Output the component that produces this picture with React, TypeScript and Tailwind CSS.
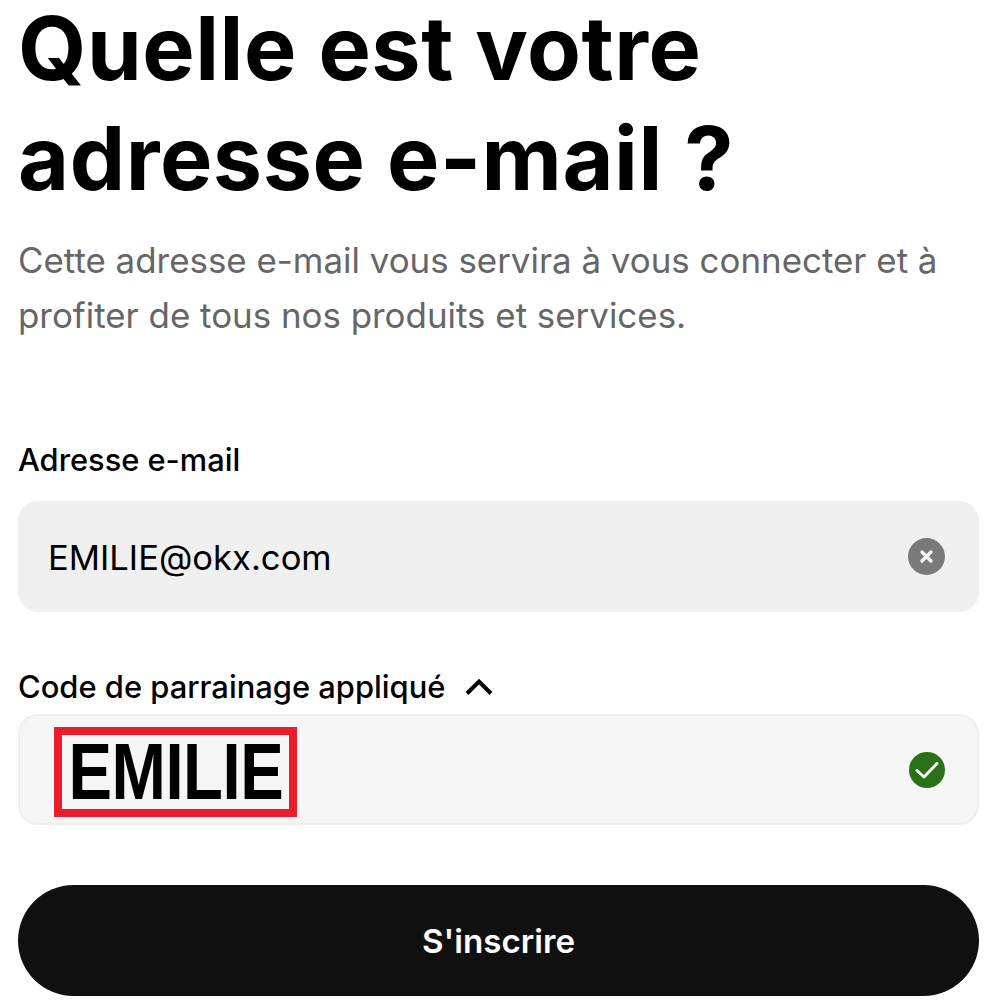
import React from "react";

const sans = "font-['Inter','Liberation_Sans',sans-serif]";

export default function App() {
  return (
    <div className={`w-[1000px] h-[1000px] overflow-hidden bg-white px-[18px] ${sans}`}>
      <div className="w-[961px]">
        <h1 className="text-[88px] font-bold text-black tracking-[0.55px]">
          <span className="block leading-[96px]">Quelle est votre</span>
          <span className="block mt-[7px] leading-[110px]">adresse e-mail ?</span>
        </h1>
        <p className="mt-[20px] text-[34.9px] leading-[55px] text-[#666666]">
          Cette adresse e-mail vous servira à vous connecter et à profiter de tous nos produits et services.
        </p>

        <label className="block mt-[97px] text-[30.8px] leading-[40px] font-medium text-black">Adresse e-mail</label>
        <div className="mt-[21px] h-[111px] rounded-[20px] bg-[#f0f0f0] pl-[30px] pr-[34px] flex items-center justify-between">
          <span className="pt-[3px] text-[34.6px] text-black">EMILIE@okx.com</span>
          <svg width="37" height="37" viewBox="0 0 37 37">
            <circle cx="18.5" cy="18.5" r="18.5" fill="#7a7a7a" />
            <path d="M14 14l9 9M23 14l-9 9" stroke="#f5f5f5" strokeWidth="3.4" strokeLinecap="round" />
          </svg>
        </div>

        <div className="mt-[55px] flex items-center gap-[20px] text-[30.9px] leading-[40px] font-medium text-black">
          <span>Code de parrainage appliqué</span>
          <svg width="28" height="18" viewBox="0 0 28 18" fill="none">
            <path d="M2 15.5L14 3.5l12 12" stroke="#000" strokeWidth="4" strokeLinejoin="miter" />
          </svg>
        </div>
        <div className="relative mt-[7px] h-[111px] rounded-[20px] bg-[#f6f6f6] border-2 border-[#efefef] pr-[32px] flex items-center justify-end">
          <div className="absolute left-[34px] top-[11px] w-[243px] h-[90px] border-[8px] border-[#ec1c2b] flex items-center justify-center overflow-hidden">
            <span className="font-['Liberation_Sans',sans-serif] font-bold text-[80px] leading-none text-black tracking-[-0.5px] inline-block scale-x-[0.815]">EMILIE</span>
          </div>
          <svg width="36" height="36" viewBox="0 0 36 36">
            <circle cx="18" cy="18" r="18" fill="#2b7119" />
            <path d="M8 18.5l7 6.5L28 11.5" stroke="#f5f5f5" strokeWidth="3" fill="none" strokeLinecap="round" strokeLinejoin="round" />
          </svg>
        </div>

        <button className="mt-[60px] pt-[2px] w-full h-[111px] rounded-full bg-[#101010] text-white text-[33.2px] font-semibold">S'inscrire</button>
      </div>
    </div>
  );
}
